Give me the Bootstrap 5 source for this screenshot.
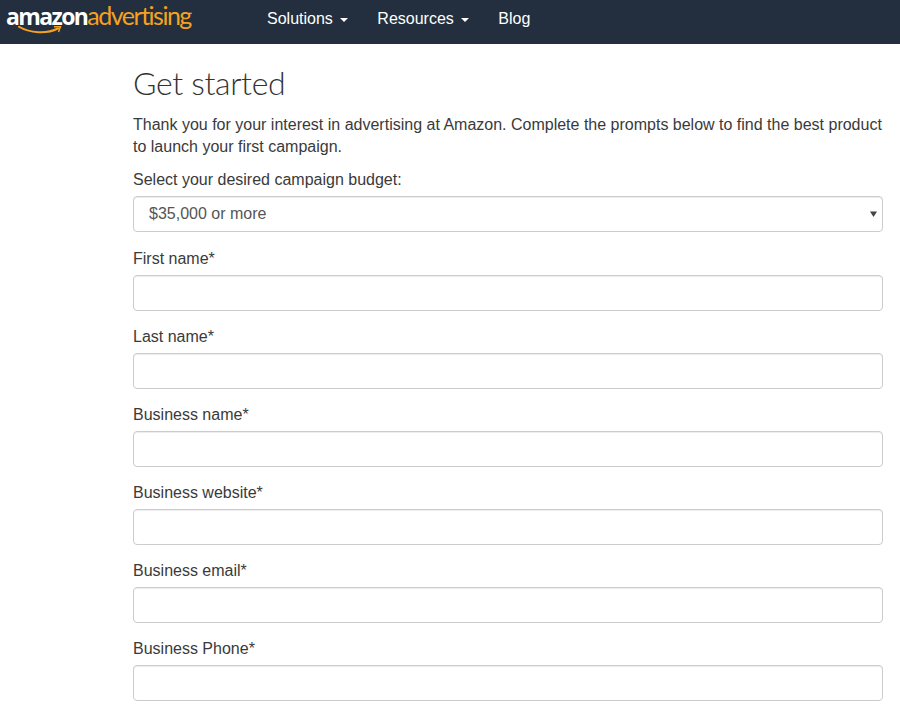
<!DOCTYPE html>
<html lang="en">
<head>
<meta charset="utf-8">
<title>Get started</title>
<link rel="stylesheet" href="https://cdn.jsdelivr.net/npm/bootstrap@5.3.0/dist/css/bootstrap.min.css">
<style>
html,body{height:715px;overflow:hidden}
body{font-family:"Liberation Sans",Arial,sans-serif;font-size:16px;color:#333;background:#fff}
.top-bar{background:#232f3e;height:44px;padding:0}
.brand-box{position:relative;display:block;width:267px;height:44px;padding:0 0 0 6px;margin:0;text-decoration:none;line-height:31px;white-space:nowrap;flex:none}
.brand-am{font-family:"Open Sans",sans-serif;font-weight:700;font-size:23px;letter-spacing:-1.6px;color:#fff}
.brand-ad{font-family:"Lato",sans-serif;font-weight:400;font-size:25px;letter-spacing:-1.5px;color:#f6a11f}
.smile{position:absolute;left:18px;top:26px;width:44px;height:11px}
.top-link{color:#fff;font-size:16px;line-height:20px;padding:9px 0 15px;text-decoration:none;display:flex;align-items:center}
.top-link:hover{color:#fff}
.caret-mark{display:inline-block;width:0;height:0;margin-left:7px;margin-top:2px;border-top:4px solid #fff;border-left:4px solid transparent;border-right:4px solid transparent}
.top-links{gap:29.5px}
.page-wrap{width:750px;margin-left:133px}
.page-title{font-family:"Lato",sans-serif;font-weight:300;font-size:32px;line-height:36px;letter-spacing:-.36px;color:#333;margin:21px 0 13px}
.intro-text{font-size:16px;line-height:22px;margin:0 0 12px;color:#3a3a3a}
.field-box{margin-bottom:16px}
.field-box-first{margin-bottom:17px}
.field-label{display:block;font-size:16px;line-height:20px;color:#3a3a3a;margin:0 0 6px}
.field-input{height:36px;border:1px solid #ccc;border-radius:4px;padding:6px 16px;font-size:16px;color:#555;box-shadow:inset 0 1px 1px rgba(0,0,0,.075)}
.field-select{padding:5px 16px 7px 15px;background-image:url("data:image/svg+xml,%3Csvg xmlns='http://www.w3.org/2000/svg' width='7' height='6'%3E%3Cpath d='M0 .5h7L3.500 6z' fill='%23444'/%3E%3C/svg%3E");background-position:right 5px center;background-size:7px 6px;background-repeat:no-repeat}
</style>
</head>
<body>
<nav class="top-bar d-flex align-items-start">
  <a class="brand-box" href="#"><span class="brand-am">amazon</span><span class="brand-ad">advertising</span>
    <svg class="smile" viewBox="0 0 44 11"><path d="M.500 .500C12 7.500 29 8 40 2.500" fill="none" stroke="#f6a11f" stroke-width="2" stroke-linecap="round"/><path d="M36 .800L42.500 .500 40.500 6" fill="none" stroke="#f6a11f" stroke-width="1.500"/></svg>
  </a>
  <div class="top-links d-flex">
    <a class="top-link" href="#">Solutions<span class="caret-mark"></span></a>
    <a class="top-link" href="#">Resources<span class="caret-mark"></span></a>
    <a class="top-link" href="#">Blog</a>
  </div>
</nav>
<main class="page-wrap">
  <h1 class="page-title">Get started</h1>
  <p class="intro-text">Thank you for your interest in advertising at Amazon. Complete the prompts below to find the best product to launch your first campaign.</p>
  <form>
    <div class="field-box-first">
      <label class="field-label" for="budget">Select your desired campaign budget:</label>
      <select class="form-select field-input field-select" id="budget"><option>$35,000 or more</option></select>
    </div>
    <div class="field-box"><label class="field-label" for="f1">First name*</label><input class="form-control field-input" id="f1" type="text"></div>
    <div class="field-box"><label class="field-label" for="f2">Last name*</label><input class="form-control field-input" id="f2" type="text"></div>
    <div class="field-box"><label class="field-label" for="f3">Business name*</label><input class="form-control field-input" id="f3" type="text"></div>
    <div class="field-box"><label class="field-label" for="f4">Business website*</label><input class="form-control field-input" id="f4" type="text"></div>
    <div class="field-box"><label class="field-label" for="f5">Business email*</label><input class="form-control field-input" id="f5" type="text"></div>
    <div class="field-box"><label class="field-label" for="f6">Business Phone*</label><input class="form-control field-input" id="f6" type="text"></div>
  </form>
</main>
<script src="https://cdn.jsdelivr.net/npm/bootstrap@5.3.0/dist/js/bootstrap.bundle.min.js"></script>
</body>
</html>
